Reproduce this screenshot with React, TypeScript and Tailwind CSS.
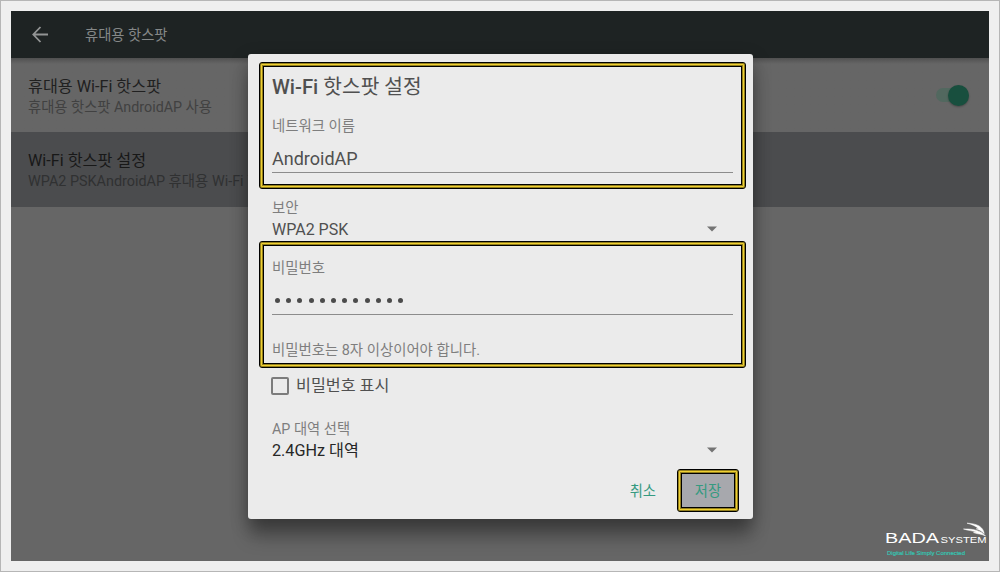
import { useState } from 'react';
import type { ReactNode } from 'react';

function Highlight({ className, children }: { className: string; children: ReactNode }) {
  return (
    <div className={`rounded-[3px] border border-black bg-[#efd033] p-[3px] shadow-[inset_0_0_0_1px_#94801c] ${className}`}>
      {children}
    </div>
  );
}

function Caret() {
  return (
    <svg width="10" height="6" viewBox="0 0 10 6" className="mr-[15px] fill-[#747474]">
      <path d="M0 0.5h10L5 5.5z" />
    </svg>
  );
}

function Logo() {
  return (
    <svg width="106" height="38" viewBox="0 0 106 38" className="absolute right-0 bottom-[1px]">
      <g fill="#fff" stroke="#fff" strokeWidth="0.5" strokeLinejoin="round">
        <path d="M84 1.200c7 .2 12.500 2 15 5.300 1.300 1.700 2 3.400 2.200 5.200-3-3.200-5-3.900-8-4.900 1-.2 1.500-.1 2.500 .1C93 4 89 2.400 84 1.200z" />
        <path d="M80.500 7c8-.3 17 .9 22 7-4-2.200-8-1.800-12-3.400 1.200-.4 2-.4 3.300-.3-4-1.600-9-1.800-13.300-3.300z" />
      </g>
      <g fill="#fff" fontFamily="Liberation Sans, sans-serif">
        <text x="2" y="21" fontSize="15.5" textLength="54" lengthAdjust="spacingAndGlyphs">BADA</text>
        <text x="57.5" y="21" fontSize="9" textLength="46" lengthAdjust="spacingAndGlyphs">SYSTEM</text>
      </g>
      <text
        x="4"
        y="33"
        fontSize="6"
        fill="#35c4b2"
        stroke="#35c4b2"
        strokeWidth="0.2"
        fontFamily="Liberation Sans, sans-serif"
        textLength="78"
        lengthAdjust="spacingAndGlyphs"
      >
        Digital Life Simply Connected
      </text>
    </svg>
  );
}

function HotspotDialog() {
  const [show, setShow] = useState(false);

  return (
    <div className="absolute top-[43px] left-[237px] flex h-[465px] w-[505px] flex-col rounded-[3px] bg-[#ebebeb] pt-[8px] pr-[7px] pl-[11px] text-[#505050] shadow-[0_20px_18px_-2px_rgba(0,0,0,0.27),0_6px_18px_rgba(0,0,0,0.3)]">
      <Highlight className="h-[127px]">
        <div className="h-full border border-black bg-[#ebebeb] px-[8px] pt-[9px] shadow-[0_0_0_1px_#94801c]">
          <h2 className="h-[24px] text-[20.3px] leading-[22px] font-medium">
            Wi-Fi <span className="font-normal">핫스팟 설정</span>
          </h2>
          <div className="mt-[17px] h-[16px] text-[14.4px] leading-[19px] text-[#7e7e7e]">네트워크 이름</div>
          <div className="mt-[12px] h-[28px] border-b border-[#8c8c8c] text-[18px] leading-[28px]">AndroidAP</div>
        </div>
      </Highlight>

      <div className="flex h-[52px] flex-col pt-[9px] pr-[14px] pl-[13px]">
        <div className="h-[18px] text-[14.4px] leading-[22px] text-[#7e7e7e]">보안</div>
        <div className="flex h-[26px] items-center justify-between text-[16px] leading-[26px]">
          <span className="mt-[2px]">WPA2 PSK</span>
          <Caret />
        </div>
      </div>

      <Highlight className="h-[127px]">
        <div className="h-full border border-black bg-[#ebebeb] px-[8px] pt-[12px] shadow-[0_0_0_1px_#94801c]">
          <div className="h-[18px] text-[14.4px] leading-[22px] text-[#7e7e7e]">비밀번호</div>
          <div className="mt-[9px] flex h-[30px] items-center gap-[6.2px] border-b border-[#8c8c8c] pt-[2px] pl-[3px]">
            {Array.from({ length: 12 }, (_, i) => (
              <span key={i} className="size-[5px] rounded-full bg-[#4b4b4b]" />
            ))}
          </div>
          <div className="mt-[25px] h-[18px] text-[14.4px] leading-[22px] text-[#7e7e7e]">
            비밀번호는 8자 이상이어야 합니다.
          </div>
        </div>
      </Highlight>

      <label className="mt-[8px] flex h-[20px] items-center pl-[12px] text-[16.2px] leading-[20px]">
        <input
          type="checkbox"
          checked={show}
          onChange={() => setShow(!show)}
          className="mr-[7px] size-[18px] appearance-none rounded-[2px] border-2 border-[#7c7c7c]"
        />
        비밀번호 표시
      </label>

      <div className="mt-[23px] flex flex-col pr-[14px] pl-[13px]">
        <div className="h-[18px] text-[14.3px] leading-[20px] text-[#7e7e7e]">AP 대역 선택</div>
        <div className="flex h-[26px] items-center justify-between text-[16.2px] leading-[26px] text-[#262626]">
          <span className="mt-[2px]">2.4GHz 대역</span>
          <Caret />
        </div>
      </div>

      <div className="mt-[6px] flex justify-end pr-[7px] text-[14.3px] text-[#359a80]">
        <button className="mr-[21px] h-[43px] pt-[2px] leading-[41px]">취소</button>
        <Highlight className="h-[43px] w-[62px]">
          <button className="block h-full w-full border border-black bg-[#a7a8ad] pt-[2px] shadow-[0_0_0_1px_#94801c]">저장</button>
        </Highlight>
      </div>
    </div>
  );
}

export default function App() {
  return (
    <div className="h-[572px] w-[1000px] border border-[#b6b6b6] bg-[#efefef] p-[10px] font-[Roboto,'Noto_Sans_CJK_KR',sans-serif]">
      <div className="relative h-[550px] w-[978px] overflow-hidden bg-[#666666]">
        <header className="flex h-[47px] items-center bg-[#1e2323] pl-[21px] text-[14.3px] text-[#858888]">
          <svg width="17" height="17" viewBox="0 0 17 17" className="mr-[36px] fill-none stroke-[#929494] stroke-[1.800]">
            <path d="M8.500 1 1.300 8.500l7.200 7.500M1.300 8.500H16" />
          </svg>
          <span className="pt-[2px]">휴대용 핫스팟</span>
        </header>

        <section className="flex h-[74px] items-center justify-between bg-linear-to-b from-[#505050] to-[#666666] to-[6px] pr-[20px] pl-[17px]">
          <div>
            <div className="h-[21px] text-[16.2px] leading-[23px] text-[#202020]">휴대용 Wi-Fi 핫스팟</div>
            <div className="h-[20px] text-[14.3px] leading-[22px] text-[#414141]">휴대용 핫스팟 AndroidAP 사용</div>
          </div>
          <div className="flex h-[14px] w-[33px] items-center justify-end rounded-full bg-[#52685f]">
            <span className="size-[21px] rounded-full bg-[#184f3e] shadow-[0_1px_2px_rgba(0,0,0,0.3)]" />
          </div>
        </section>

        <section className="flex h-[75px] flex-col justify-center bg-[#4b4c4e] pt-[2px] pl-[17px] whitespace-nowrap">
          <div className="h-[21px] text-[16.2px] leading-[21px] text-[#181818]">Wi-Fi 핫스팟 설정</div>
          <div className="h-[20px] text-[14.4px] leading-[22px] text-[#303132]">WPA2 PSKAndroidAP 휴대용 Wi-Fi 핫스팟</div>
        </section>

        <HotspotDialog />
        <Logo />
      </div>
    </div>
  );
}
